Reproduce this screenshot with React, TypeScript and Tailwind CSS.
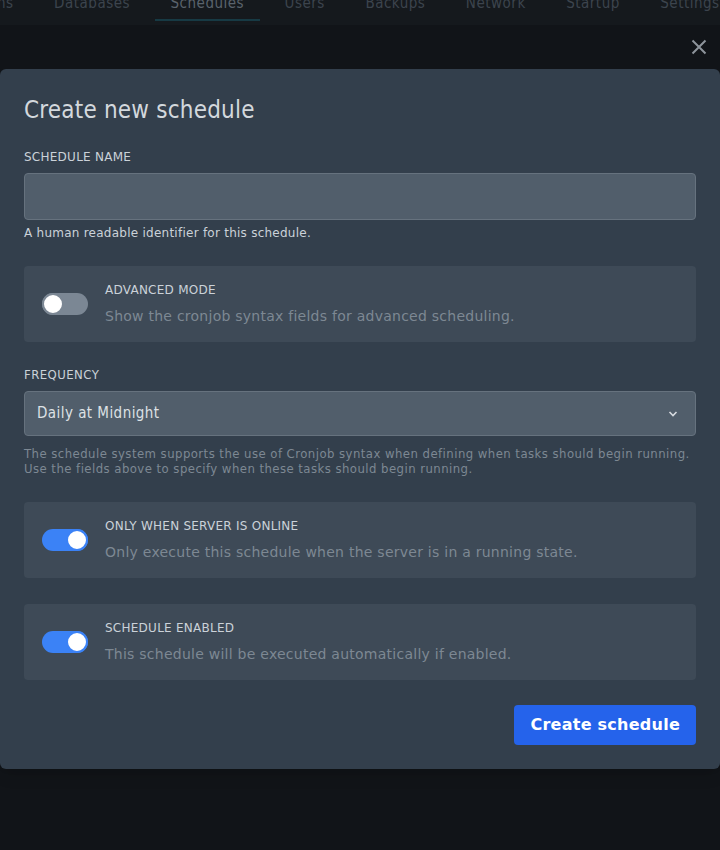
import { useState } from 'react';

const tabs = ['ns', 'Databases', 'Schedules', 'Users', 'Backups', 'Network', 'Startup', 'Settings'];

function Toggle({ on, onChange }: { on: boolean; onChange: () => void }) {
  return (
    <button
      type="button"
      onClick={onChange}
      className={`relative w-[46px] h-[22px] rounded-full shrink-0 ${on ? 'bg-[#3b82f6]' : 'bg-[#7b8794]'}`}
    >
      <span
        className={`absolute top-0 w-[22px] h-[22px] rounded-full bg-white border-2 ${
          on ? 'left-[24px] border-[#3b82f6]' : 'left-0 border-[#7b8794]'
        }`}
      />
    </button>
  );
}

function SwitchCard({
  title,
  description,
  on,
  onChange,
}: {
  title: string;
  description: string;
  on: boolean;
  onChange: () => void;
}) {
  return (
    <div className="flex items-center bg-[#3e4a57] rounded-sm pl-[18px] pr-4 py-4">
      <Toggle on={on} onChange={onChange} />
      <div className="ml-[17px]">
        <p className="text-xs leading-4 text-[#cbd2d9] uppercase">{title}</p>
        <p className="text-sm leading-5 mt-2 text-[#7d8893]">{description}</p>
      </div>
    </div>
  );
}

export default function App() {
  const [name, setName] = useState('');
  const [advanced, setAdvanced] = useState(false);
  const [onlineOnly, setOnlineOnly] = useState(true);
  const [enabled, setEnabled] = useState(true);

  return (
    <div className="min-h-[850px] bg-[#111418] font-['DejaVu_Sans',sans-serif] tracking-[0.25px]">
      <div className="h-[25px] overflow-hidden bg-[#15191d]">
        <div className="flex -mt-[12px] font-['DejaVu_Sans_Condensed','DejaVu_Sans',sans-serif] text-[15px] tracking-[0.5px] text-[#3c444d]">
          {tabs.map((tab, i) => (
            <div
              key={tab}
              className={`px-4 pt-[4px] pb-[4px] ${i === 0 ? '-ml-[19px]' : 'ml-[8.5px]'} ${
                tab === 'Schedules' ? 'text-[#5a636c] border-b-2 border-[#173a44]' : ''
              }`}
            >
              {tab}
            </div>
          ))}
        </div>
      </div>

      <div className="flex justify-end h-[44px] items-center pr-[13px]">
        <svg width="16" height="16" viewBox="0 0 16 16" className="text-[#8d949b]">
          <path d="M1.5 1.5 L14.5 14.5 M14.5 1.5 L1.5 14.5" stroke="currentColor" strokeWidth="2" />
        </svg>
      </div>

      <div className="bg-[#333f4c] rounded-md p-6 shadow-lg">
        <h2 className="text-2xl leading-8 mt-px text-[#d3d8dd] tracking-[0.2px] font-['DejaVu_Sans_Condensed','DejaVu_Sans',sans-serif]">
          Create new schedule
        </h2>

        <div className="mt-[23px]">
          <label className="block text-xs leading-4 text-[#cbd2d9] mb-2">SCHEDULE NAME</label>
          <input
            value={name}
            onChange={(e) => setName(e.target.value)}
            className="w-full h-[47px] px-3 bg-[#515e6b] border border-[#66727e] rounded-sm text-sm text-[#e4e7eb] outline-none"
          />
          <p className="text-xs leading-4 mt-[5px] text-[#cbd2d9]">A human readable identifier for this schedule.</p>
        </div>

        <div className="mt-[25px]">
          <SwitchCard
            title="Advanced Mode"
            description="Show the cronjob syntax fields for advanced scheduling."
            on={advanced}
            onChange={() => setAdvanced(!advanced)}
          />
        </div>

        <div className="mt-[25px] font-['DejaVu_Sans_Condensed','DejaVu_Sans',sans-serif] tracking-[0.45px]">
          <label className="block text-[13px] leading-4 text-[#cbd2d9] mb-2">FREQUENCY</label>
          <div className="flex items-center justify-between h-[45px] pl-[12px] pr-[17px] bg-[#515e6b] border border-[#66727e] rounded-sm">
            <span className="text-[15px] text-[#dde1e5]">Daily at Midnight</span>
            <svg width="10" height="8" viewBox="0 0 10 8" className="text-[#d7dbe0]">
              <path d="M1.5 2 L5 5.5 L8.5 2" fill="none" stroke="currentColor" strokeWidth="1.6" />
            </svg>
          </div>
          <p className="text-[13px] leading-[15px] mt-[10px] text-[#7d8893]">
            The schedule system supports the use of Cronjob syntax when defining when tasks should begin running.
            <br />
            Use the fields above to specify when these tasks should begin running.
          </p>
        </div>

        <div className="mt-[26px]">
          <SwitchCard
            title="Only when server is online"
            description="Only execute this schedule when the server is in a running state."
            on={onlineOnly}
            onChange={() => setOnlineOnly(!onlineOnly)}
          />
        </div>

        <div className="mt-[26px]">
          <SwitchCard
            title="Schedule enabled"
            description="This schedule will be executed automatically if enabled."
            on={enabled}
            onChange={() => setEnabled(!enabled)}
          />
        </div>

        <div className="flex justify-end mt-[25px]">
          <button className="h-10 px-4 bg-[#2563eb] rounded-sm text-white font-bold text-base">
            Create schedule
          </button>
        </div>
      </div>
    </div>
  );
}
